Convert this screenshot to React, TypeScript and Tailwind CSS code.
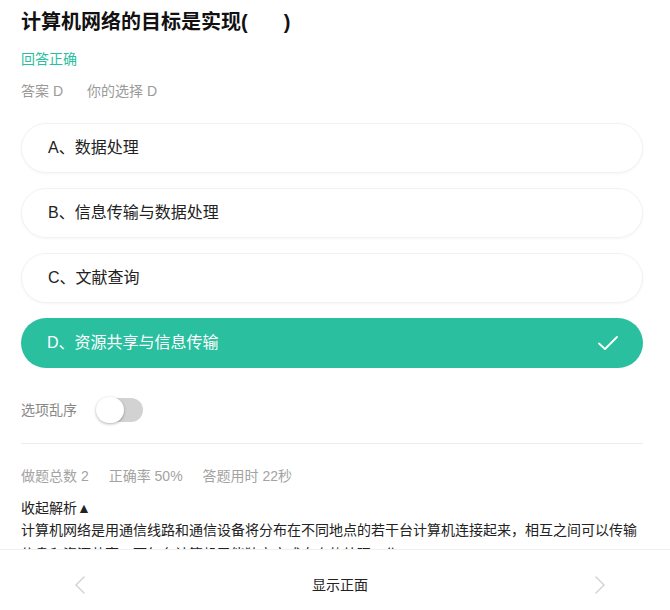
import React from 'react';

const font = { fontFamily: '"Liberation Sans", "Noto Sans CJK SC", sans-serif' };

interface Option {
  key: string;
  label: string;
}

const options: Option[] = [
  { key: 'A', label: '数据处理' },
  { key: 'B', label: '信息传输与数据处理' },
  { key: 'C', label: '文献查询' },
  { key: 'D', label: '资源共享与信息传输' },
];

const answer = 'D';

const Check: React.FC = () => (
  <svg width="22" height="18" viewBox="0 0 22 18" fill="none">
    <path d="M2 9.5 L8 15 L20 3" stroke="white" strokeWidth="1.8" strokeLinecap="round" strokeLinejoin="round" />
  </svg>
);

const Chevron: React.FC<{ dir: 'left' | 'right' }> = ({ dir }) => (
  <svg width="12" height="20" viewBox="0 0 12 20" fill="none">
    <path
      d={dir === 'left' ? 'M10 2 L2 10 L10 18' : 'M2 2 L10 10 L2 18'}
      stroke="#d4d4d4"
      strokeWidth="1.5"
      strokeLinecap="round"
      strokeLinejoin="round"
    />
  </svg>
);

export default function App() {
  return (
    <div className="h-[610px] overflow-hidden bg-white text-[#333]" style={font}>
      <div className="pl-[21px] pr-[27px] pt-[8px]">
        {/* Question */}
        <h1 className="text-[20px] leading-[28px] font-bold text-[#111]">
          计算机网络的目标是实现(<span className="inline-block w-[36px]" />)
        </h1>
        <div className="mt-[13px] text-[14px] leading-[20px] text-[#29bf9f]">回答正确</div>
        <div className="mt-[12px] flex text-[14px] leading-[20px] text-[#9a9a9a]">
          <span>答案 D</span>
          <span className="ml-[24px]">你的选择 D</span>
        </div>

        {/* Options */}
        <div className="mt-[22px] flex flex-col gap-[15px]">
          {options.map((o) => {
            const selected = o.key === answer;
            return (
              <div
                key={o.key}
                className={`flex h-[50px] items-center justify-between rounded-full pl-[26px] pr-[24px] text-[16px] ${
                  selected
                    ? 'bg-[#29bf9f] text-white'
                    : 'border border-[#f2f2f2] bg-white text-[#222] shadow-[0_1px_3px_rgba(0,0,0,0.04)]'
                }`}
              >
                <span>
                  {o.key}、{o.label}
                </span>
                {selected && <Check />}
              </div>
            );
          })}
        </div>

        {/* Shuffle toggle */}
        <div className="mt-[29px] flex h-[26px] items-center">
          <span className="text-[14px] text-[#888]">选项乱序</span>
          <div className="relative ml-[19px] h-[26px] w-[47px]">
            <div className="absolute right-0 top-[1px] h-[24px] w-[36px] rounded-full bg-[#d2d2d2]" />
            <div className="absolute left-0 top-0 h-[26px] w-[28px] rounded-full bg-white shadow-[0_1px_3px_rgba(0,0,0,0.3)]" />
          </div>
        </div>

        <div className="mt-[20px] h-px bg-[#ececec]" />

        {/* Stats */}
        <div className="mt-[22px] flex text-[14px] leading-[20px] text-[#a3a3a3]">
          <span>做题总数 2</span>
          <span className="ml-[20px]">正确率 50%</span>
          <span className="ml-[20px]">答题用时 22秒</span>
        </div>

        {/* Analysis */}
        <div className="mt-[12px] text-[14px] leading-[20px] text-[#222]">收起解析▲</div>
        <p className="text-[14px] leading-[24px] text-[#222]">
          计算机网络是用通信线路和通信设备将分布在不同地点的若干台计算机连接起来，相互之间可以传输信息和资源共享，而每台计算机又能独立完成自身的处理工作。
        </p>
      </div>

      {/* Bottom bar */}
      <div className="fixed bottom-0 left-0 right-0 flex h-[61px] items-center justify-between border-t border-[#f0f0f0] bg-white pl-[74px] pr-[64px] pt-[10px]">
        <Chevron dir="left" />
        <span className="text-[14px] text-[#222]">显示正面</span>
        <Chevron dir="right" />
      </div>
    </div>
  );
}
